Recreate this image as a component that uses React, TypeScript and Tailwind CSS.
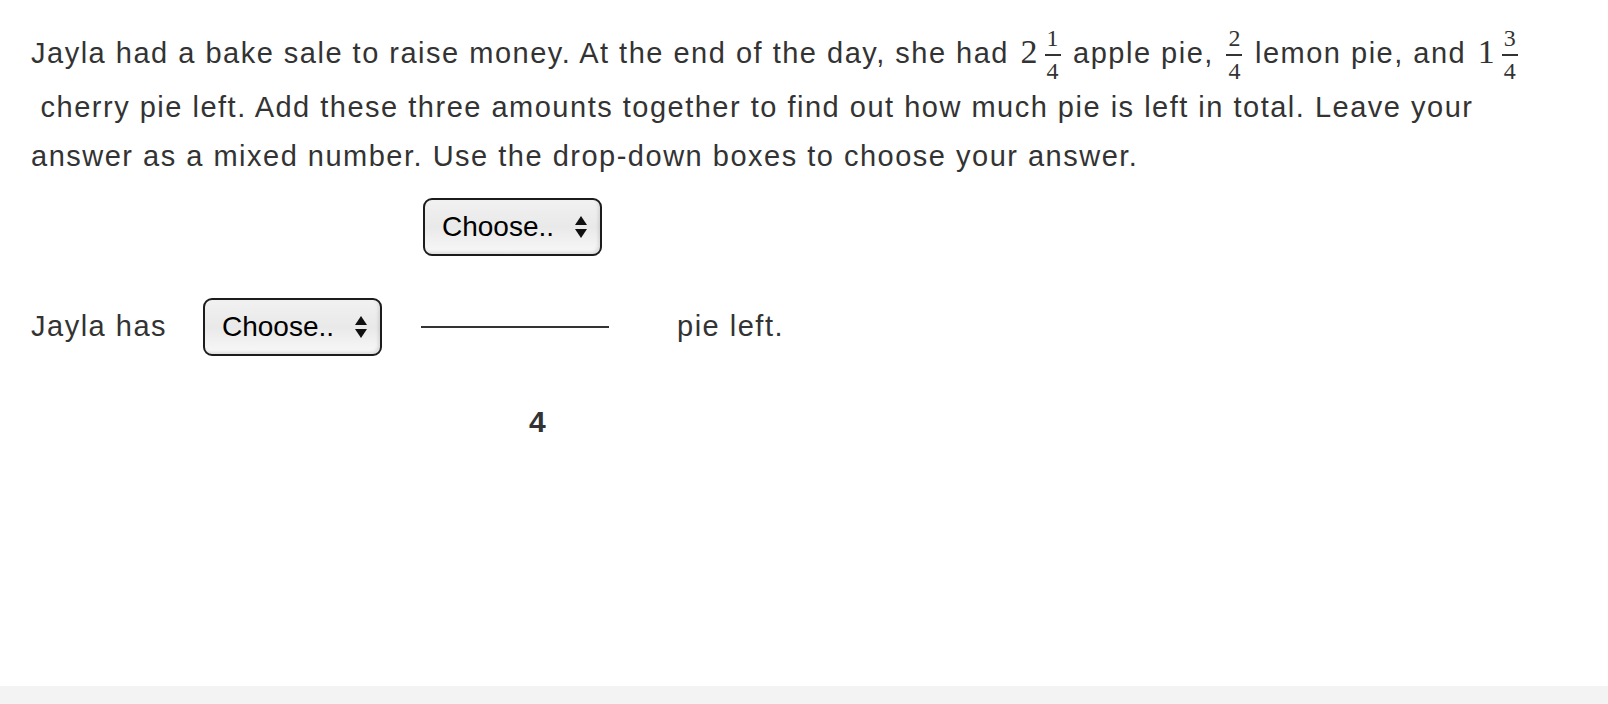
import React from "react";

const sans = "font-['Liberation_Sans',Arial,sans-serif]";
const serif = "font-['Liberation_Serif','DejaVu_Serif',serif]";

function Frac({ num, den }: { num: string; den: string }) {
  return (
    <span className={`${serif} mx-[3px] inline-flex flex-col items-center align-[17px] text-[24px] leading-none tracking-normal`}>
      <span className="px-[2px] pb-[4px]">{num}</span>
      <span className="h-[1.5px] w-full bg-[#333]" />
      <span className="px-[2px] pt-[3px]">{den}</span>
    </span>
  );
}

function Whole({ n }: { n: string }) {
  return <span className={`${serif} ml-[2px] mr-[4px] text-[34px] tracking-normal`}>{n}</span>;
}

function ChooseBox() {
  return (
    <div
      className={`${sans} flex h-[58px] w-[179px] items-center justify-between rounded-[9px] border-2 border-[#1c1c1c] bg-linear-to-b from-[#f1f1f1] via-[#e9e9e9] to-[#f8f8f8] pl-[17px] pr-[13px] text-[28px] tracking-normal text-black shadow-[inset_-2px_-2px_3px_rgba(0,0,0,0.10)]`}
    >
      <span>Choose..</span>
      <svg width="12" height="22" viewBox="0 0 12 22">
        <path d="M6 0 L12 9 L0 9 Z" fill="#111" />
        <path d="M0 13 L12 13 L6 22 Z" fill="#111" />
      </svg>
    </div>
  );
}

export default function App() {
  return (
    <div className={`${sans} flex h-[704px] flex-col bg-white text-[#333]`}>
      <div className="flex-1 pl-[31px] pt-[26px]">
        <p className="whitespace-nowrap text-[29px] leading-[49px] tracking-[1.5px]">
          Jayla had a bake sale to raise money. At the end of the day, she had <Whole n="2" />
          <Frac num="1" den="4" /> apple pie, <Frac num="2" den="4" /> lemon pie, and <Whole n="1" />
          <Frac num="3" den="4" />
          <br />
          {"\u00a0"}cherry pie left. Add these three amounts together to find out how much pie is left in total. Leave your
          <br />
          answer as a mixed number. Use the drop-down boxes to choose your answer.
        </p>

        <div className="mt-[17px] grid grid-cols-[172px_218px_256px_auto] text-[29px] tracking-[1.5px]">
          <div className="col-start-3 ml-[2px]">
            <ChooseBox />
          </div>

          <div className="col-start-1 mt-[42px] flex h-[58px] items-center">Jayla has</div>
          <div className="mt-[42px] flex h-[58px] items-center">
            <ChooseBox />
          </div>
          <div className="mt-[42px] flex h-[58px] items-center">
            <div className="h-[2px] w-[188px] bg-[#333]" />
          </div>
          <div className="mt-[42px] flex h-[58px] items-center">pie left.</div>

          <div className="col-start-3 mt-[50px] pl-[108px] text-[30px] font-bold leading-[32px] tracking-normal">4</div>
        </div>
      </div>
      <div className="h-[18px] bg-[#f3f3f3]" />
    </div>
  );
}
